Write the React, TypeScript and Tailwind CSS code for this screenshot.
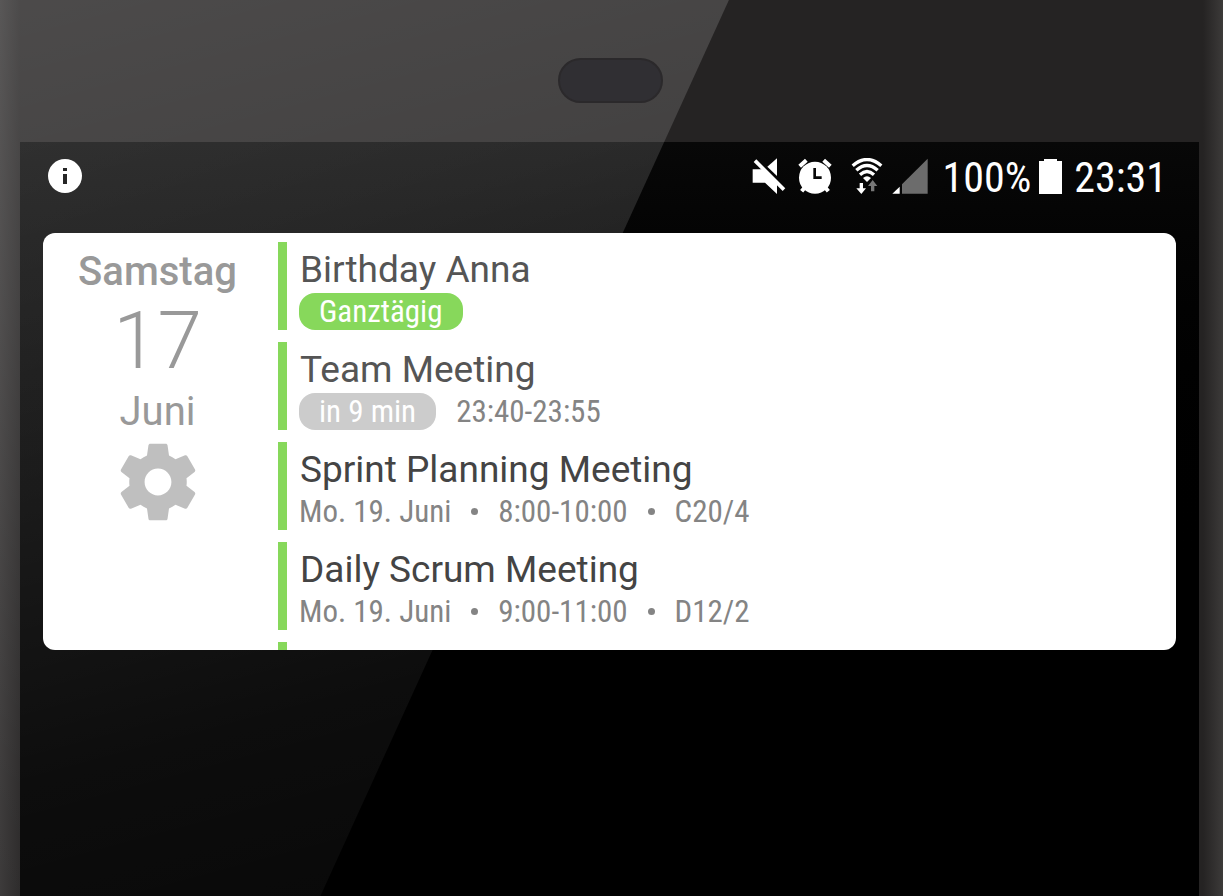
import { clsx } from "clsx"

type CalendarEvent = {
  title: string
  badge?: string
  badgeClass?: string
  details: string[]
  titleClass: string
}

const EVENTS: CalendarEvent[] = [
  { title: "Birthday Anna", badge: "Ganztägig", badgeClass: "bg-[#87d85b]", details: [], titleClass: "text-[#555555]" },
  { title: "Team Meeting", badge: "in 9 min", badgeClass: "bg-[#cccccc]", details: ["23:40-23:55"], titleClass: "text-[#555555]" },
  { title: "Sprint Planning Meeting", details: ["Mo. 19. Juni", "8:00-10:00", "C20/4"], titleClass: "text-[#444444]" },
  { title: "Daily Scrum Meeting", details: ["Mo. 19. Juni", "9:00-11:00", "D12/2"], titleClass: "text-[#444444]" },
]

function InfoIcon() {
  return (
    <svg className="size-[34px]" viewBox="0 0 34 34" aria-hidden="true">
      <circle cx="17" cy="17" r="17" fill="#fff" />
      <path d="M15 9h4v3h-4zM15 15h4v10h-4z" fill="#262626" />
    </svg>
  )
}

function MuteIcon() {
  return (
    <svg className="h-9 w-[34px]" viewBox="36 38 102 108" aria-hidden="true">
      <path d="M38 72h34l39 39v35L75 112H38z" fill="#fff" />
      <path d="M82 64l29-25v53z" fill="#fff" />
      <path d="M45 46l87 87" stroke="#fff" strokeWidth="11" />
    </svg>
  )
}

function AlarmIcon() {
  return (
    <svg className="h-9 w-[34px]" viewBox="173 38 102 108" aria-hidden="true">
      <circle cx="224" cy="97" r="48" fill="#fff" />
      <g fill="none" stroke="#fff" strokeWidth="12">
        <path d="M178 63l20-18M250 45l20 18M197 122l-13 16M251 122l13 16" />
      </g>
      <path d="M223 68v29h21" fill="none" stroke="#080808" strokeWidth="8" />
    </svg>
  )
}

function WifiIcon() {
  return (
    <svg className="h-9 w-[34px]" viewBox="329 38 102 108" aria-hidden="true">
      <g fill="none" stroke="#fff" strokeWidth="10">
        <path d="M337 61Q380 24 423 61" />
        <path d="M348 75Q380 46 412 75" />
        <path d="M359 88Q380 69 401 88" />
      </g>
      <path d="M368 98q12-10 24 0l-12 12z" fill="#fff" />
      <path d="M358 113h10v16h9l-14 17-15-17h10z" fill="#fff" />
      <path d="M392 138h10v-16h9l-14-18-14 18h9z" fill="#777" />
    </svg>
  )
}

function SignalIcon() {
  return (
    <svg className="h-9 w-9" viewBox="458 38 108 108" aria-hidden="true">
      <path d="M459 145l22-21v21z" fill="#fff" />
      <path d="M488 145v-28l77-77v105z" fill="#6c6c6c" />
    </svg>
  )
}

function BatteryIcon() {
  return (
    <svg className="h-9 w-[23px]" viewBox="0 0 23 36" aria-hidden="true">
      <path d="M0 3h5V1h13v2h5v33H0z" fill="#fff" />
    </svg>
  )
}

function GearIcon() {
  return (
    <svg className="size-[92px]" viewBox="0 0 24 24" fill="#bfbfbf" aria-hidden="true">
      <path d="M19.43 12.98c.04-.32.07-.64.07-.98s-.03-.66-.07-.98l2.11-1.65c.19-.15.24-.42.12-.64l-2-3.46c-.12-.22-.39-.3-.61-.22l-2.49 1c-.52-.4-1.08-.73-1.69-.98l-.38-2.65C14.46 2.18 14.25 2 14 2h-4c-.25 0-.46.18-.49.42l-.38 2.65c-.61.25-1.17.59-1.69.98l-2.49-1c-.23-.09-.49 0-.61.22l-2 3.46c-.13.22-.07.49.12.64l2.11 1.65c-.04.32-.07.65-.07.98s.03.66.07.98l-2.11 1.65c-.19.15-.24.42-.12.64l2 3.46c.12.22.39.3.61.22l2.49-1c.52.4 1.08.73 1.69.98l.38 2.65c.03.24.24.42.49.42h4c.25 0 .46-.18.49-.42l.38-2.65c.61-.25 1.17-.59 1.69-.98l2.49 1c.23.09.49 0 .61-.22l2-3.46c.12-.22.07-.49-.12-.64l-2.11-1.65zM12 15.5c-1.93 0-3.5-1.57-3.5-3.5s1.57-3.5 3.5-3.5 3.5 1.57 3.5 3.5-1.57 3.5-3.5 3.5z" />
    </svg>
  )
}

function StatusBar() {
  return (
    <header className="relative flex h-[91px] items-center justify-between pr-8 pb-6 pl-7 font-['Roboto_Condensed',Roboto,sans-serif] text-[42px] leading-none text-white">
      <InfoIcon />
      <div className="flex items-center">
        <div className="mr-3.5 flex items-center gap-3">
          <MuteIcon />
          <AlarmIcon />
          <div className="ml-1.5 flex items-center gap-2">
            <WifiIcon />
            <SignalIcon />
          </div>
        </div>
        <span className="pt-1">100%</span>
        <div className="mr-3 ml-2">
          <BatteryIcon />
        </div>
        <time className="pt-1">23:31</time>
      </div>
    </header>
  )
}

function EventRow({ event }: { event: CalendarEvent }) {
  return (
    <li className="flex h-[88px] border-l-[9px] border-[#87d85b] pl-3">
      <div className="min-w-0">
        <h2 className={clsx("h-[51px] pt-1 pl-px text-[37px] leading-[48px] whitespace-nowrap", event.titleClass)}>{event.title}</h2>
        <div className="flex h-[37px] items-center font-['Roboto_Condensed',Roboto,sans-serif] text-[31px] leading-[37px] whitespace-nowrap text-[#848484]">
          {event.badge && (
            <span className={clsx("mr-5 rounded-2xl px-5 text-white", event.badgeClass)}>{event.badge}</span>
          )}
          {event.details.map((detail, i) => (
            <span key={detail} className="flex items-center">
              {i > 0 && <span className="mx-5 size-[7px] rounded-full bg-[#848484]" />}
              {detail}
            </span>
          ))}
        </div>
      </div>
    </li>
  )
}

function AgendaWidget() {
  return (
    <section className="relative mx-[23px] flex overflow-hidden rounded-xl bg-white">
      <div className="flex w-[235px] shrink-0 flex-col items-center pt-3 pr-1.5 text-[#999999]">
        <p className="text-[40px] leading-[53px] font-medium">Samstag</p>
        <p className="text-[80px] leading-[86px] font-light">17</p>
        <p className="text-[40px] leading-[56px]">Juni</p>
        <button type="button" aria-label="Einstellungen" className="-mt-1">
          <GearIcon />
        </button>
      </div>
      <ul className="flex min-w-0 flex-1 flex-col gap-3 pt-[9px]">
        {EVENTS.map((e) => <EventRow key={e.title} event={e} />)}
        {/* Edge of the next entry */}
        <li className="h-2 border-l-[9px] border-[#87d85b]" />
      </ul>
    </section>
  )
}

export default function App() {
  return (
    <div className="relative flex min-h-screen flex-col overflow-hidden bg-[linear-gradient(to_right,#343232_0px,#252323_20px,#252323_calc(100%-20px),#3c3a39_100%)] font-[Roboto,sans-serif]">
      <div className="flex h-[142px] items-center justify-center pt-[19px] pr-0.5">
        <div className="relative z-10 h-[45px] w-[105px] rounded-full border-2 border-[#2b292b] bg-[#302f33]" />
      </div>
      <main className="mr-6 ml-5 flex-1 bg-linear-to-b from-[#080808] to-black to-60%">
        {/* Glare across the glass */}
        <div className="pointer-events-none absolute inset-0 bg-[linear-gradient(165deg,rgba(255,255,255,0.18)_0%,rgba(255,255,255,0.14)_25%,rgba(255,255,255,0.05)_65%,rgba(255,255,255,0.02)_100%)] [clip-path:polygon(0_0,59.6%_0,26.2%_100%,0_100%)]" />
        <StatusBar />
        <AgendaWidget />
      </main>
    </div>
  )
}
